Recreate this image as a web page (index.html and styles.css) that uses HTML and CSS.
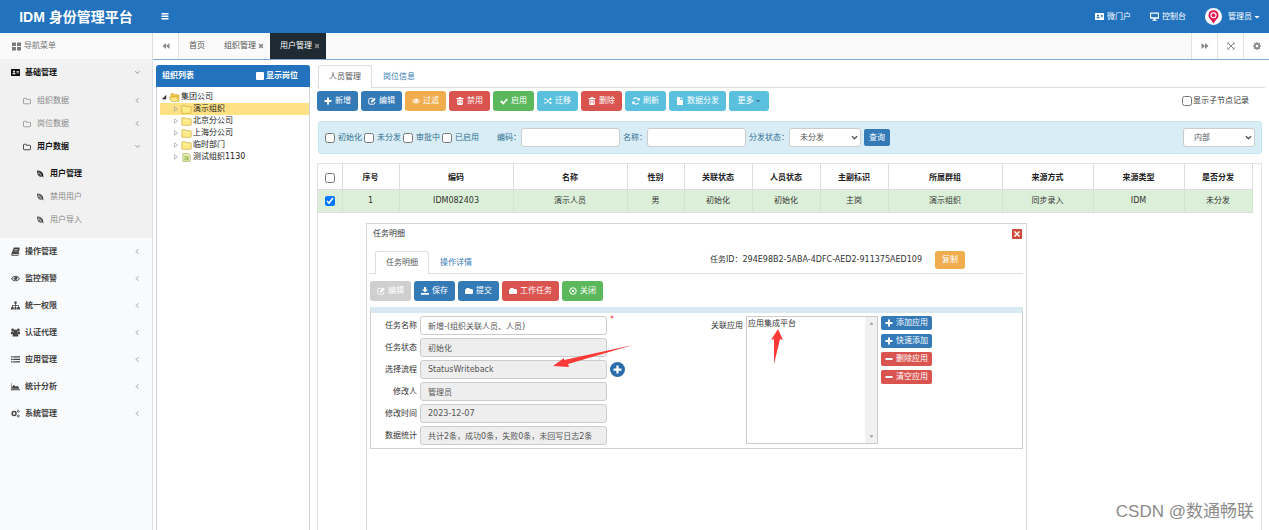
FILE: index.html
```html
<!DOCTYPE html>
<html lang="zh-CN">
<head>
<meta charset="utf-8">
<title>IDM 身份管理平台</title>
<link rel="stylesheet" href="styles.css">
</head>
<body>
<svg class="sprite" aria-hidden="true">
  <symbol id="bars" viewBox="0 0 16 16"><path d="M1 2h14v3H1zM1 7h14v3H1zM1 12h14v3H1z"/></symbol>
  <symbol id="grid" viewBox="0 0 16 16"><path d="M0 1h7v6H0zM9 1h7v6H9zM0 9h7v6H0zM9 9h7v6H9z"/></symbol>
  <symbol id="card" viewBox="0 0 18 16"><path fill-rule="evenodd" d="M1 1h16q1 0 1 1v12q0 1-1 1H1q-1 0-1-1V2q0-1 1-1zM6 4a2 2 0 1 0 .01 0zM2.500 11.500h7q0-3-3.500-3t-3.500 3zM11 5v1.500h5V5zM11 8v1.500h5V8z"/></symbol>
  <symbol id="monitor" viewBox="0 0 16 16"><path fill-rule="evenodd" d="M1 1h14q1 0 1 1v9q0 1-1 1h-5v2h2v1.500H4V14h2v-2H1q-1 0-1-1V2q0-1 1-1zM2 3v6.500h12V3z"/></symbol>
  <symbol id="folder-o" viewBox="0 0 16 16"><path fill="none" stroke="currentColor" stroke-width="1.500" d="M1 4q0-1.500 1.500-1.500h3q1 0 1 1V4.500h7q1.500 0 1.500 1.500v6q0 1.500-1.500 1.500h-11Q1 13.500 1 12z"/></symbol>
  <symbol id="folder" viewBox="0 0 16 16"><path d="M0 5h16v7q0 2-2 2H2q-2 0-2-2zM2 5q0-3 2-3h4q1.500 0 1.500 2H13q1.500 0 1.500 1z"/></symbol>
  <symbol id="leaf" viewBox="0 0 16 16"><path d="M2 1q10 0 12 7l1 7-3-2Q2 15 2 1z"/><path d="M4 3l9 11M6 3v4H3M10 5v5H5" fill="none" stroke="#f1f1f1" stroke-width="1"/></symbol>
  <symbol id="book" viewBox="0 0 16 16"><path fill-rule="evenodd" d="M5 1h9q2 0 1.500 2l-2.500 8q-.5 2-2 2H3q-1 0-1 1 0 .5 1 .5h9l2-5 1 .5-2 5q-.5 1-2 1H3q-3 0-2.500-3zM6 4v1h6V4zM5.500 6.500v1h6v-1z"/></symbol>
  <symbol id="eye" viewBox="0 0 16 16"><path fill-rule="evenodd" d="M0 8q3.500-5 8-5t8 5q-3.500 5-8 5T0 8zm2 0q2.500 3.500 6 3.500T14 8q-1.500-2-3-2.800Q12 8 10.500 9.500q-2.500 2-5 0Q4 8 5 5.200 3.500 6 2 8zm6-3.500Q5.500 5 5.500 7.500h1Q6.500 6 8 5.500z"/></symbol>
  <symbol id="sitemap" viewBox="0 0 16 16"><path d="M6 1h4v4H8.700v2.500H14V11h2v4h-5v-4h1.500V9H8.700v2H10v4H6v-4h1.300V9H3.500v2H5v4H0v-4h2V7.500h5.300V5H6z"/></symbol>
  <symbol id="users" viewBox="0 0 16 16"><circle cx="3" cy="3.500" r="2.500"/><circle cx="13" cy="3.500" r="2.500"/><circle cx="8" cy="6" r="3.500"/><path d="M0 6.500h4.500l1 3-3 1.500H0zM16 6.500h-4.500l-1 3 3 1.500H16zM3 15v-2q0-4 3-4h4q3 0 3 4v2z"/></symbol>
  <symbol id="list" viewBox="0 0 16 16"><path d="M0 2h3v2.500H0zM4 2h12v2.500H4zM0 6.500h3V9H0zM4 6.500h12V9H4zM0 11h3v2.500H0zM4 11h12v2.500H4z"/></symbol>
  <symbol id="area" viewBox="0 0 16 16"><path d="M0 2h1v11h15v1.500H0zM2 12V9l3-4 3 3 3-1 3 2v3z"/></symbol>
  <symbol id="gears" viewBox="0 0 16 16"><g fill="none" stroke="currentColor"><circle cx="5.500" cy="8" r="3.500" stroke-width="2.500"/><circle cx="13" cy="4" r="1.700" stroke-width="1.500"/><circle cx="13" cy="12.500" r="1.700" stroke-width="1.500"/></g></symbol>
  <symbol id="left" viewBox="0 0 16 16"><path fill="none" stroke="currentColor" stroke-width="2" d="M10 3L5 8l5 5"/></symbol>
  <symbol id="down" viewBox="0 0 16 16"><path fill="none" stroke="currentColor" stroke-width="2" d="M3 5l5 5 5-5"/></symbol>
  <symbol id="chev" viewBox="0 0 16 16"><path fill="none" stroke="currentColor" stroke-width="3" d="M2 5l6 6 6-6"/></symbol>
  <symbol id="rew" viewBox="0 0 16 16"><path d="M8 2v12L1 8zM15 2v12L8 8z"/></symbol>
  <symbol id="fwd" viewBox="0 0 16 16"><path d="M1 2v12l7-6zM8 2v12l7-6z"/></symbol>
  <symbol id="expand" viewBox="0 0 16 16"><path d="M1 1h5L1 6zM15 1v5l-5-5zM1 15v-5l5 5zM15 15h-5l5-5z"/><path d="M3 3l10 10M13 3L3 13" stroke="currentColor" stroke-width="2"/></symbol>
  <symbol id="gear" viewBox="0 0 16 16"><circle cx="8" cy="8" r="4.500" fill="none" stroke="currentColor" stroke-width="3.500"/><path d="M8 0v3M8 13v3M0 8h3M13 8h3M2.300 2.300l2 2M11.700 11.700l2 2M13.700 2.300l-2 2M2.300 13.700l2-2" stroke="currentColor" stroke-width="2.500"/></symbol>
  <symbol id="x" viewBox="0 0 16 16"><path d="M3 3l10 10M13 3L3 13" stroke="currentColor" stroke-width="4"/></symbol>
  <symbol id="plus" viewBox="0 0 16 16"><path d="M6 1h4v5h5v4h-5v5H6v-5H1V6h5z"/></symbol>
  <symbol id="minus" viewBox="0 0 16 16"><path d="M1 6h14v4H1z"/></symbol>
  <symbol id="edit" viewBox="0 0 16 16"><path fill="none" stroke="currentColor" stroke-width="1.800" d="M10 2.500H4Q1.500 2.500 1.500 5v7q0 2.500 2.500 2.500h7q2.500 0 2.500-2.500v-2"/><path d="M6 8l6.500-6.500 3 3L9 11H6z"/></symbol>
  <symbol id="trash" viewBox="0 0 16 16"><path fill-rule="evenodd" d="M5 2q0-2 2-2h2q2 0 2 2h4v2H1V2zM2.500 5h11v9q0 2-2 2h-7q-2 0-2-2zM5 7v6h1V7zM7.500 7v6h1V7zM10 7v6h1V7z"/></symbol>
  <symbol id="check" viewBox="0 0 16 16"><path fill="none" stroke="currentColor" stroke-width="3.600" d="M1.500 8l5 5L14.500 4"/></symbol>
  <symbol id="random" viewBox="0 0 16 16"><path fill="none" stroke="currentColor" stroke-width="2" d="M0 4h3q2 0 4.500 4T12 12h1M0 12h3q2 0 4.500-4T12 4h1"/><path d="M12 1l4 3-4 3zM12 9l4 3-4 3z"/></symbol>
  <symbol id="refresh" viewBox="0 0 16 16"><path fill="none" stroke="currentColor" stroke-width="2.200" d="M14 6.500A6.200 6.200 0 0 0 3 4.200M2 9.500a6.200 6.200 0 0 0 11 2.300"/><path d="M15.500 1v6h-6zM.5 15V9h6z"/></symbol>
  <symbol id="file" viewBox="0 0 16 16"><path d="M2 0h6v5q0 1 1 1h5v10H2zM9.500 0L14 4.700H9.500z"/></symbol>
  <symbol id="save" viewBox="0 0 16 16"><path d="M6 0h4v5h4l-6 6-6-6h4zM0 12h16v3.500H0z"/></symbol>
  <symbol id="target" viewBox="0 0 16 16"><circle cx="8" cy="8" r="6.500" fill="none" stroke="currentColor" stroke-width="2"/><path stroke="currentColor" stroke-width="2" d="M5.500 5.500l5 5M10.500 5.500l-5 5"/></symbol>
  <symbol id="caret" viewBox="0 0 16 16"><path d="M1 5h14l-7 7z"/></symbol>
  <symbol id="tree-folder" viewBox="0 0 20 16"><path fill="#fdea84" stroke="#c49420" d="M1.500 2q0-1 1-1h5l1.500 2h8.500q1 0 1 1v10q0 1-1 1h-15q-1 0-1-1z"/><path stroke="#fff6c5" d="M3 5.500h14"/></symbol>
  <symbol id="tree-open" viewBox="0 0 20 16"><path fill="#f3c945" stroke="#c49420" d="M3.500 12V2q0-1 1-1h4l1.500 2h7q1 0 1 1v9"/><path fill="#fdea84" stroke="#c49420" d="M1 7h14l3.500 8H4z"/></symbol>
  <symbol id="tree-doc" viewBox="0 0 16 16"><path fill="#eef0bb" stroke="#9a9d48" d="M1.500 1h10l3 3v11h-13z"/><path fill="none" stroke="#80ab41" stroke-width="1.500" d="M4 6h4M4 9h8M4 12h8M10 5v6"/></symbol>
</svg>

<div class="app">
<header class="topbar">
  <h1 class="brand">IDM 身份管理平台</h1>
  <button class="menu-toggle" aria-label="菜单"><svg class="ico"><use href="#bars"/></svg></button>
  <nav class="top-links">
    <a href="#"><svg class="ico wide"><use href="#card"/></svg>微门户</a>
    <a href="#"><svg class="ico wide"><use href="#monitor"/></svg>控制台</a>
    <a href="#" class="user">
      <svg class="avatar" viewBox="0 0 32 32"><circle cx="16" cy="16" r="16" fill="#fff"/><path fill="#e5134f" fill-rule="evenodd" d="M16 4a9.500 9.500 0 0 1 9.500 9.500C25.500 19 20 22 16 29 12 22 6.500 19 6.500 13.500A9.500 9.500 0 0 1 16 4zm0 3.500a6 6 0 1 0 .01 0z"/><circle cx="16" cy="13.500" r="3.500" fill="#e5134f"/></svg>
      管理员<svg class="caret"><use href="#caret"/></svg></a>
  </nav>
</header>

<div class="shell">
<aside class="sidebar">
  <div class="side-title"><svg class="ico wide"><use href="#grid"/></svg>导航菜单</div>
  <div class="group">
    <a href="#" class="nav-item current"><svg class="ico wide"><use href="#card"/></svg><span>基础管理</span><svg class="arrow"><use href="#down"/></svg></a>
    <div class="subnav">
      <a href="#"><svg class="ico"><use href="#folder-o"/></svg><span>组织数据</span><svg class="arrow"><use href="#left"/></svg></a>
      <a href="#"><svg class="ico"><use href="#folder-o"/></svg><span>岗位数据</span><svg class="arrow"><use href="#left"/></svg></a>
      <a href="#" class="current"><svg class="ico"><use href="#folder-o"/></svg><span>用户数据</span><svg class="arrow"><use href="#down"/></svg></a>
    </div>
    <div class="leafnav">
      <a href="#" class="current"><svg class="ico"><use href="#leaf"/></svg>用户管理</a>
      <a href="#"><svg class="ico"><use href="#leaf"/></svg>禁用用户</a>
      <a href="#"><svg class="ico"><use href="#leaf"/></svg>用户导入</a>
    </div>
  </div>
  <a href="#" class="nav-item"><svg class="ico wide"><use href="#book"/></svg><span>操作管理</span><svg class="arrow"><use href="#left"/></svg></a>
  <a href="#" class="nav-item"><svg class="ico wide"><use href="#eye"/></svg><span>监控预警</span><svg class="arrow"><use href="#left"/></svg></a>
  <a href="#" class="nav-item"><svg class="ico wide"><use href="#sitemap"/></svg><span>统一权限</span><svg class="arrow"><use href="#left"/></svg></a>
  <a href="#" class="nav-item"><svg class="ico wide"><use href="#users"/></svg><span>认证代理</span><svg class="arrow"><use href="#left"/></svg></a>
  <a href="#" class="nav-item"><svg class="ico wide"><use href="#list"/></svg><span>应用管理</span><svg class="arrow"><use href="#left"/></svg></a>
  <a href="#" class="nav-item"><svg class="ico wide"><use href="#area"/></svg><span>统计分析</span><svg class="arrow"><use href="#left"/></svg></a>
  <a href="#" class="nav-item"><svg class="ico wide"><use href="#gears"/></svg><span>系统管理</span><svg class="arrow"><use href="#left"/></svg></a>
</aside>

<div class="content">
  <div class="pagetabs">
    <button class="cell" aria-label="向左"><svg class="ico"><use href="#rew"/></svg></button>
    <a href="#" class="ptab">首页</a>
    <a href="#" class="ptab">组织管理<svg class="tx"><use href="#x"/></svg></a>
    <a href="#" class="ptab active">用户管理<svg class="tx"><use href="#x"/></svg></a>
    <span class="spacer"></span>
    <button class="cell" aria-label="向右"><svg class="ico"><use href="#fwd"/></svg></button>
    <button class="cell" aria-label="全屏"><svg class="ico"><use href="#expand"/></svg></button>
    <button class="cell" aria-label="设置"><svg class="ico"><use href="#gear"/></svg></button>
  </div>

  <div class="workspace">
    <section class="org">
      <div class="org-head"><span>组织列表</span><label><input type="checkbox" class="plain">显示岗位</label></div>
      <ul class="tree">
        <li><svg class="tri" viewBox="0 0 8 8"><path fill="#333" d="M7 1v6H1z"/></svg><svg class="ticon"><use href="#tree-open"/></svg>集团公司</li>
        <li class="child selected"><svg class="tri" viewBox="0 0 8 8"><path fill="none" stroke="#aaa" d="M2 1v6l4-3z"/></svg><svg class="ticon"><use href="#tree-folder"/></svg>演示组织</li>
        <li class="child"><svg class="tri" viewBox="0 0 8 8"><path fill="none" stroke="#aaa" d="M2 1v6l4-3z"/></svg><svg class="ticon"><use href="#tree-folder"/></svg>北京分公司</li>
        <li class="child"><svg class="tri" viewBox="0 0 8 8"><path fill="none" stroke="#aaa" d="M2 1v6l4-3z"/></svg><svg class="ticon"><use href="#tree-folder"/></svg>上海分公司</li>
        <li class="child"><svg class="tri" viewBox="0 0 8 8"><path fill="none" stroke="#aaa" d="M2 1v6l4-3z"/></svg><svg class="ticon"><use href="#tree-folder"/></svg>临时部门</li>
        <li class="child"><svg class="tri" viewBox="0 0 8 8"><path fill="none" stroke="#aaa" d="M2 1v6l4-3z"/></svg><svg class="ticon"><use href="#tree-doc"/></svg>测试组织1130</li>
      </ul>
    </section>

    <main class="main">
      <div class="tabs"><a href="#" class="tab active">人员管理</a><a href="#" class="tab">岗位信息</a></div>
      <div class="toolbar">
        <button class="btn blue"><svg class="ico"><use href="#plus"/></svg>新增</button>
        <button class="btn blue"><svg class="ico"><use href="#edit"/></svg>编辑</button>
        <button class="btn orange"><svg class="ico"><use href="#eye"/></svg>过滤</button>
        <button class="btn red"><svg class="ico"><use href="#trash"/></svg>禁用</button>
        <button class="btn green"><svg class="ico"><use href="#check"/></svg>启用</button>
        <button class="btn cyan"><svg class="ico"><use href="#random"/></svg>迁移</button>
        <button class="btn red"><svg class="ico"><use href="#trash"/></svg>删除</button>
        <button class="btn cyan"><svg class="ico"><use href="#refresh"/></svg>刷新</button>
        <button class="btn cyan"><svg class="ico"><use href="#file"/></svg>数据分发</button>
        <button class="btn cyan more">更多<svg class="caret"><use href="#caret"/></svg></button>
        <label class="show-children"><input type="checkbox">显示子节点记录</label>
      </div>

      <form class="filter">
        <label class="ck"><input type="checkbox">初始化</label>
        <label class="ck"><input type="checkbox">未分发</label>
        <label class="ck"><input type="checkbox">审批中</label>
        <label class="ck"><input type="checkbox">已启用</label>
        <label class="lab code" for="f-code">编码：</label><input type="text" class="txt" id="f-code">
        <label class="lab" for="f-name">名称：</label><input type="text" class="txt" id="f-name">
        <label class="lab" for="f-state">分发状态：</label>
        <span class="sel"><select id="f-state"><option>未分发</option></select><svg><use href="#chev"/></svg></span>
        <button type="button" class="btn blue query">查询</button>
        <span class="sel last"><select aria-label="范围"><option>内部</option></select><svg><use href="#chev"/></svg></span>
      </form>

      <div class="grid-wrap">
        <table class="grid">
          <colgroup><col class="w24"><col class="w57"><col class="w114"><col class="w114"><col class="w57"><col class="w68"><col class="w68"><col class="w68"><col class="w114"><col class="w91"><col class="w91"><col class="w68"></colgroup>
          <thead><tr><th><input type="checkbox" aria-label="全选"></th><th>序号</th><th>编码</th><th>名称</th><th>性别</th><th>关联状态</th><th>人员状态</th><th>主副标识</th><th>所属群组</th><th>来源方式</th><th>来源类型</th><th>是否分发</th></tr></thead>
          <tbody><tr><td><input type="checkbox" checked aria-label="选择"></td><td>1</td><td>IDM082403</td><td>演示人员</td><td>男</td><td>初始化</td><td>初始化</td><td>主岗</td><td>演示组织</td><td>同步录入</td><td>IDM</td><td>未分发</td></tr></tbody>
        </table>
      </div>

      <section class="dialog" role="dialog" aria-label="任务明细">
        <div class="dlg-title"><span>任务明细</span><button class="close" aria-label="关闭"><svg viewBox="0 0 16 16"><path d="M4 4l8 8M12 4l-8 8" stroke="#fff" stroke-width="2.500"/></svg></button></div>
        <div class="dlg-tabs">
          <div class="tabs"><a href="#" class="tab active">任务明细</a><a href="#" class="tab">操作详情</a></div>
          <div class="task-id"><span>任务ID：294E98B2-5ABA-4DFC-AED2-911375AED109</span><button class="btn orange copy">复制</button></div>
        </div>
        <div class="toolbar dlg-tools">
          <button class="btn gray" disabled><svg class="ico"><use href="#edit"/></svg>编辑</button>
          <button class="btn blue"><svg class="ico"><use href="#save"/></svg>保存</button>
          <button class="btn blue"><svg class="ico"><use href="#folder"/></svg>提交</button>
          <button class="btn red"><svg class="ico"><use href="#folder"/></svg>工作任务</button>
          <button class="btn green"><svg class="ico"><use href="#target"/></svg>关闭</button>
        </div>
        <div class="panel">
          <div class="fields">
            <label for="t1">任务名称</label><input id="t1" type="text" value="新增-(组织关联人员、人员)"><span class="req">*</span>
            <label for="t2">任务状态</label><input id="t2" type="text" readonly value="初始化"><span></span>
            <label for="t3">选择流程</label><input id="t3" type="text" readonly value="StatusWriteback"><button class="add" aria-label="选择"><svg class="ico"><use href="#plus"/></svg></button>
            <label for="t4">修改人</label><input id="t4" type="text" readonly value="管理员"><span></span>
            <label for="t5">修改时间</label><input id="t5" type="text" readonly value="2023-12-07"><span></span>
            <label for="t6">数据统计</label><input id="t6" type="text" readonly value="共计2条，成功0条，失败0条，未回写日志2条"><span></span>
          </div>
          <div class="apps">
            <label for="apps">关联应用</label>
            <div class="listbox">
              <select id="apps" size="8"><option>应用集成平台</option></select>
              <div class="scroll"><svg viewBox="0 0 8 8"><path d="M1 6h6L4 2z"/></svg><svg viewBox="0 0 8 8"><path d="M1 2h6L4 6z"/></svg></div>
            </div>
            <div class="app-btns">
              <button class="btn blue"><svg class="ico"><use href="#plus"/></svg>添加应用</button>
              <button class="btn blue"><svg class="ico"><use href="#plus"/></svg>快速添加</button>
              <button class="btn red"><svg class="ico"><use href="#minus"/></svg>删除应用</button>
              <button class="btn red"><svg class="ico"><use href="#minus"/></svg>清空应用</button>
            </div>
          </div>
          <svg class="mark one" viewBox="0 0 80 26"><path fill="#f93a36" d="M0 21L11 13l0 2L80 0 15 19l1 3z"/></svg>
          <svg class="mark two" viewBox="0 0 12 36"><path fill="#f93a36" d="M7 0l5 11-3-1L3 35 3 10 0 11z"/></svg>
        </div>
      </section>
    </main>
  </div>
</div>
</div>
<div class="watermark">CSDN @数通畅联</div>
</div>
</body>
</html>
```

FILE: styles.css
```css
* { box-sizing: border-box; }
body {
  margin: 0;
  font: 8px/12px "DejaVu Sans", "Noto Sans CJK SC", sans-serif;
  color: #333;
  background: #fff;
}
a { color: inherit; text-decoration: none; }
button, input, select { font: inherit; color: inherit; margin: 0; }
button { border: 0; padding: 0; background: none; white-space: nowrap; }
input[type="checkbox"] { width: 10px; height: 10px; flex: none; }
svg { fill: currentColor; flex: none; }
.sprite { display: none; }
.ico { width: 8px; height: 8px; }
.ico.wide { width: 9px; height: 9px; }
.caret { width: 6px; height: 6px; }

.app { display: flex; flex-direction: column; height: 100vh; overflow: hidden; position: relative; }

/* top bar */
.topbar { display: flex; align-items: center; flex: none; height: 33px; background: #2272bd; color: #fff; padding-right: 9px; }
.brand { width: 152px; margin: 0; text-align: center; font: bold 14px/20px "Liberation Sans", "Noto Sans CJK SC", sans-serif; }
.menu-toggle { margin-left: 9px; height: 20px; }
.menu-toggle .ico { display: block; margin-top: -2px; }
.menu-toggle { display: flex; align-items: center; }
.top-links { display: flex; align-items: center; gap: 19px; margin-left: auto; }
.top-links a { display: flex; align-items: center; gap: 3px; }
.top-links .user { gap: 6px; }
.top-links .caret { margin-left: -4px; }
.avatar { width: 17px; height: 17px; }

/* sidebar */
.shell { display: flex; flex: 1; min-height: 0; }
.sidebar { flex: none; width: 153px; background: #f9fafc; border-right: 1px solid #dcdfe3; }
.side-title { display: flex; align-items: center; gap: 3px; height: 26px; padding-left: 12px; color: #777; background: #fafafa; }
.group { background: #f1f1f1; padding-bottom: 7px; }
.nav-item { display: flex; align-items: center; gap: 5px; height: 27px; padding: 0 11px 0 11px; font-weight: bold; color: #444; }
.sidebar .current { color: #111; font-weight: bold; }
.arrow { width: 7px; height: 7px; margin-left: auto; color: #888; }
.subnav { padding: 3px 0 4px; }
.subnav a { display: flex; align-items: center; gap: 6px; height: 23px; padding: 0 11px 0 23px; color: #888; }
.leafnav a { display: flex; align-items: center; gap: 6px; height: 23px; padding-left: 36px; color: #888; }
.leafnav .ico { color: #444; }
.leafnav .current .ico { color: #111; }

/* page tabs */
.content { flex: 1; min-width: 0; display: flex; flex-direction: column; }
.pagetabs { display: flex; flex: none; height: 27px; background: #fafafa; border-bottom: 1px solid #7fa9d3; color: #555; }
.cell { display: flex; align-items: center; justify-content: center; width: 26px; color: #888; background: #fff; border-left: 1px solid #e2e2e2; }
.cell:first-child { border-left: 0; border-right: 1px solid #e2e2e2; }
.ptab { display: flex; align-items: center; gap: 2px; padding: 0 6px 0 10px; }
.ptab:nth-child(2) { padding-right: 9px; }
.ptab.active { background: #1f2b33; color: #fff; }
.tx { width: 6px; height: 6px; color: #888; }
.spacer { flex: 1; }

/* organisation tree */
.workspace { display: flex; flex: 1; min-height: 0; gap: 7px; padding: 5px 4px 0 3px; }
.org { flex: none; width: 154px; border: 1px solid #ccd3d9; border-bottom: 0; border-radius: 3px 3px 0 0; }
.org-head { display: flex; align-items: center; justify-content: space-between; height: 22px; padding: 0 12px 0 6px; margin: -1px -1px 0; border-radius: 3px 3px 0 0; background: #2272bd; color: #fff; font-weight: bold; }
.org-head label { display: flex; align-items: center; gap: 2px; }
.org-head .plain { appearance: none; width: 8px; height: 8px; background: #fff; border-radius: 1px; }
.tree { list-style: none; margin: 0; padding: 4px 0 0 3px; color: #222; }
.tree li { display: flex; align-items: center; height: 12px; gap: 1px; }
.tree .child { padding-left: 12px; }
.tree .selected { background: #ffe185; }
.tri { width: 6px; height: 6px; margin-left: 1px; }
.ticon { width: 11px; height: 9px; margin-left: 1px; }

/* main area */
.main { flex: 1; min-width: 0; position: relative; display: flex; flex-direction: column; }
.tabs { display: flex; height: 23px; }
.main > .tabs { flex: none; border-bottom: 1px solid #ddd; padding-left: 1px; }
.tab { display: flex; align-items: center; padding: 0 10px; border: 1px solid transparent; border-bottom: 0; color: #337ab7; height: 23px; }
.tab.active { color: #555; background: #fff; border-color: #ddd; border-radius: 3px 3px 0 0; }
.tab + .tab { padding-left: 10px; }
.toolbar { display: flex; align-items: center; gap: 3px; margin-top: 3px; }
.btn { display: flex; align-items: center; justify-content: center; gap: 3px; height: 20px; padding: 0 7px; border-radius: 3px; color: #fff; }
.blue { background: #337ab7; }
.orange { background: #f0ad4e; }
.red { background: #d9534f; }
.green { background: #5cb85c; }
.cyan { background: #5bc0de; }
.gray { background: #cfcfcf; }
.more { width: 40px; gap: 1px; }
.more .caret { color: #38809a; }
.show-children { display: flex; align-items: center; gap: 1px; margin-left: auto; padding-right: 16px; }

.filter { display: flex; align-items: center; flex: none; height: 33px; margin: 10px 3px 9px 1px; padding: 0 6px; background: #d9edf7; border: 1px solid #c5e5ef; border-radius: 3px; color: #31708f; }
.ck { display: flex; align-items: center; gap: 3px; margin-right: 2px; }
.lab { margin-left: 3px; }
.code { margin-left: 16px; }
.txt { width: 99px; height: 19px; border: 1px solid #ccc; border-radius: 3px; background: #fff; }
.sel { position: relative; display: flex; width: 72px; color: #555; }
.sel select { appearance: none; width: 100%; height: 19px; padding: 0 10px; border: 1px solid #ccc; border-radius: 3px; background: #fff; }
.sel svg { position: absolute; right: 3px; top: 6px; width: 7px; height: 7px; pointer-events: none; }
.sel.last { margin-left: auto; }
.query { height: 17px; padding: 0 5px; margin-left: 3px; border-radius: 2px; }

.grid-wrap { flex: 1; margin: 0 3px 0 0; padding-right: 12px; border: 1px solid #e2e2e2; border-bottom: 0; }
.grid { width: 100%; table-layout: fixed; border-collapse: collapse; text-align: center; }
.grid th, .grid td { padding: 0; border-right: 1px solid #ddd; border-bottom: 1px solid #ddd; }
.grid th { height: 25px; padding-top: 3px; color: #222; }
.grid td { height: 23px; background: #dcefd8; border-right-color: #d3e4cf; }
.grid input { display: block; margin: 0 auto; }
.w24 { width: 24px; }
.w57 { width: 57px; }
.w68 { width: 68px; }
.w91 { width: 91px; }
.w114 { width: 114px; }

/* task dialog */
.dialog { position: absolute; left: 49px; right: 238px; top: 158px; bottom: 0; background: #fff; border: 1px solid #d5d5d5; border-bottom: 0; padding: 0 3px; }
.dlg-title { display: flex; align-items: center; justify-content: space-between; height: 20px; padding: 0 1px 0 3px; }
.close { width: 10px; height: 10px; background: #cf4a39; border-radius: 1px; }
.close svg { display: block; width: 10px; height: 10px; }
.dlg-tabs { display: flex; align-items: flex-end; justify-content: space-between; height: 30px; padding: 0 58px 0 5px; border-bottom: 1px solid #ddd; }
.dlg-tabs .tabs { margin-bottom: -1px; }
.task-id { display: flex; align-items: center; gap: 13px; margin-bottom: 4px; }
.copy { height: 18px; }
.dlg-tools { margin-top: 7px; }
.panel { position: relative; display: flex; justify-content: space-between; height: 142px; margin-top: 6px; padding: 3px 90px 0 0; border: 1px solid #d0d0d0; border-top: 6px solid #d9e9f2; }
.fields { display: grid; grid-template-columns: 46px 187px 16px; grid-auto-rows: 19px; gap: 3px; align-items: center; align-content: start; }
.fields label { text-align: right; }
.fields input { height: 19px; width: 100%; border: 1px solid #ccc; border-radius: 3px; padding: 0 7px; color: #555; }
.fields input[readonly] { background: #eee; }
.req { color: #e33; align-self: start; line-height: 8px; }
.add { width: 15px; height: 15px; border-radius: 50%; background: #2a6cab; color: #fff; display: flex; align-items: center; justify-content: center; }
.add .ico { width: 9px; height: 9px; }
.apps { display: flex; gap: 3px; align-items: flex-start; }
.apps label { margin-top: 4px; }
.listbox { display: flex; width: 132px; height: 128px; border: 1px solid #ccc; }
.listbox select { flex: 1; min-width: 0; height: 100%; appearance: none; border: 0; padding: 0; background: #fff; overflow: hidden; }
.listbox option { padding: 0 1px; min-height: 12px; }
.scroll { width: 12px; background: #f1f1f1; color: #999; display: flex; flex-direction: column; justify-content: space-between; align-items: center; padding: 4px 0; }
.scroll svg { width: 5px; height: 5px; }
.app-btns { display: flex; flex-direction: column; gap: 4px; }
.app-btns .btn { height: 14px; padding: 0 4px; border-radius: 2px; }
.mark { position: absolute; pointer-events: none; }
.one { left: 182px; top: 32px; width: 80px; height: 26px; }
.two { left: 400px; top: 16px; width: 12px; height: 36px; }

.watermark { position: absolute; right: 15px; bottom: 6px; font: 17px/24px "Liberation Sans", "Noto Sans CJK SC", sans-serif; color: #8b8b8b; }
```
